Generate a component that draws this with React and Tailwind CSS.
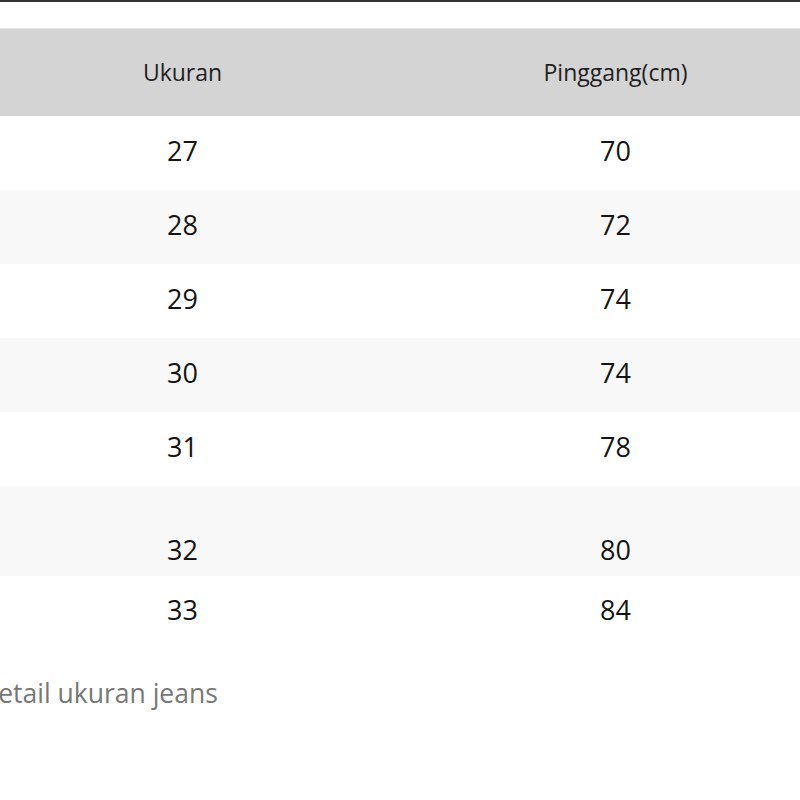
const ROWS = [
  { size: '27', waist: '70', cls: 'h-[74px] bg-white pb-[5px]' },
  { size: '28', waist: '72', cls: 'h-[74px] bg-[#f8f8f8] pb-[5px]' },
  { size: '29', waist: '74', cls: 'h-[74px] bg-white pb-[5px]' },
  { size: '30', waist: '74', cls: 'h-[74px] bg-[#f8f8f8] pb-[5px]' },
  { size: '31', waist: '78', cls: 'h-[74px] bg-white pb-[5px]' },
  { size: '32', waist: '80', cls: 'h-[90px] bg-[#f8f8f8] pt-[36px]' },
  { size: '33', waist: '84', cls: 'h-[68px] bg-white pb-[2px]' },
]

export default function App() {
  return (
    <div
      className="w-[800px] h-[800px] overflow-hidden bg-white"
      style={{ fontFamily: '"Open Sans", "Noto Sans", sans-serif' }}
    >
      <div className="h-[2px] bg-[#333]" />
      <div className="h-[26px]" />

      {/* size table, wider than the viewport */}
      <div className="ml-[-34px] w-[866px]">
        <div className="h-[88px] grid grid-cols-2 items-center bg-[#d4d4d4] border-t border-[#e4e4e4] text-[23px] text-[#1f1f1f] text-center">
          <div>Ukuran</div>
          <div>Pinggang(cm)</div>
        </div>
        {ROWS.map(r => (
          <div key={r.size} className={`grid grid-cols-2 items-center text-[27px] leading-none text-[#141414] text-center ${r.cls}`}>
            <div>{r.size}</div>
            <div>{r.waist}</div>
          </div>
        ))}
      </div>

      <div className="mt-[30px] ml-[-21px] text-[26.5px] text-[#777]">Detail ukuran jeans</div>
    </div>
  )
}
